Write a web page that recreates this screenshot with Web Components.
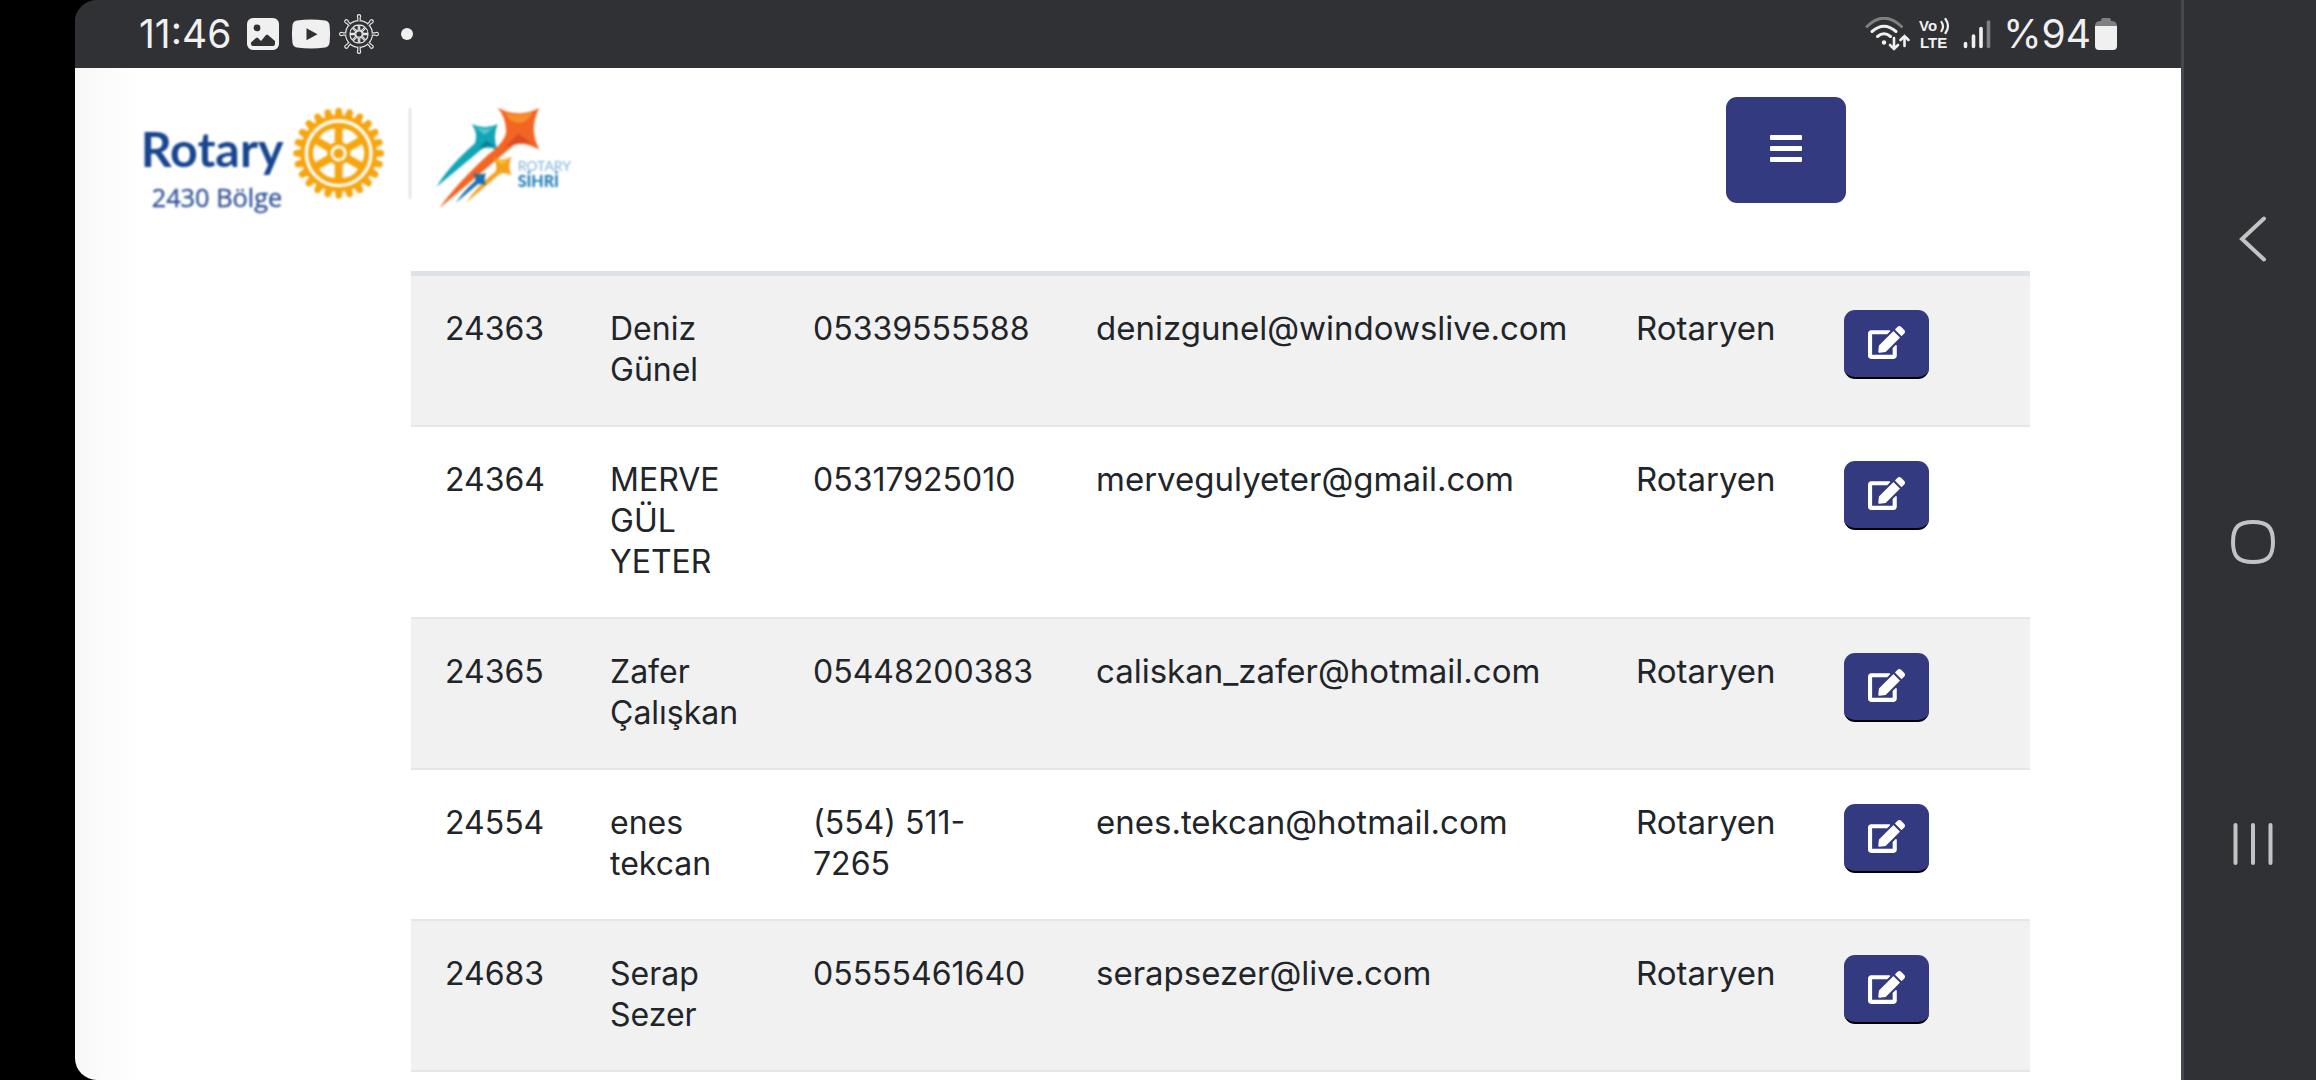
<!DOCTYPE html>
<html lang="tr">
<head>
<meta charset="utf-8">
<meta name="viewport" content="width=device-width, initial-scale=1">
<title>Rotary 2430 Bölge</title>
<style>
  body {
    margin: 0;
    background: #000;
    font-family: Inter, "Noto Sans", sans-serif;
    color: #212529;
  }
</style>
</head>
<body>
<device-frame>
  <status-bar slot="status" time="11:46" battery="%94"></status-bar>
  <site-header><rotary-logo></rotary-logo></site-header>
  <member-table></member-table>
  <system-nav slot="nav"></system-nav>
</device-frame>

<script>
class DeviceFrame extends HTMLElement {
  constructor() {
    super();
    const shadow = this.attachShadow({ mode: 'open' });
    shadow.innerHTML = `
      <style>
      :host {
        display: flex;
        min-height: 100vh;
        padding-left: 75px;
        box-sizing: border-box;
        background: #000;
      }

      .screen {
        flex: 1;
        min-width: 0;
        display: flex;
        flex-direction: column;
        overflow: hidden;
        border-radius: 22px 0 0 22px;
        background: #303134;
      }

      main {
        flex: 1;
        background: linear-gradient(to right, #f8f8f8, #fff 64px);
      }
      </style>
      <div class="screen">
        <slot name="status"></slot>
        <main><slot></slot></main>
      </div>
      <slot name="nav"></slot>
    `;
  }
}

class StatusBar extends HTMLElement {
  constructor() {
    super();
    const shadow = this.attachShadow({ mode: 'open' });
    const time = this.getAttribute('time');
    const battery = this.getAttribute('battery');

    shadow.innerHTML = `
      <style>
      :host {
        display: flex;
        justify-content: space-between;
        align-items: center;
        height: 68px;
        padding: 0 64px;
        color: #f0f0f0;
        background: #303134;
        font-size: 39px;
        line-height: 48px;
      }

      .group,
      .battery {
        display: flex;
        align-items: center;
        gap: 8px;
      }

      .battery {
        gap: 4px;
        margin-left: 4px;
      }

      .time {
        margin-right: 8px;
      }

      .picture {
        margin-right: 4px;
      }

      .dot {
        width: 12px;
        height: 12px;
        margin-left: 14px;
        border-radius: 50%;
        background: #f0f0f0;
      }

      svg {
        display: block;
        flex: none;
      }
      </style>
      <div class="group">
        <span class="time">${time}</span>
        <svg class="picture" width="32" height="32" viewBox="0 0 32 32">
          <path fill="#f0f0f0" fill-rule="evenodd" d="M6 0h20a6 6 0 0 1 6 6v20a6 6 0 0 1-6 6H6a6 6 0 0 1-6-6V6a6 6 0 0 1 6-6zM10 6.500a3.400 3.400 0 1 0 0 6.800 3.400 3.400 0 0 0 0-6.800zM4 26q0 2 2 2h20q2 0 2-2v-3l-7-6q-1-.8-2 0l-5 6-3-3q-1-.8-2 0l-5 4.500z"/>
        </svg>
        <svg width="40" height="32" viewBox="0 0 40 32">
          <path fill="#f0f0f0" fill-rule="evenodd" d="M6 2.500q14-1.800 28 0 4 .6 4.600 5 1 8.500 0 17-.6 4.400-4.600 5-14 1.800-28 0-4-.6-4.600-5-1-8.500 0-17 .6-4.400 4.600-5zM15.500 10.300v12l11-6z"/>
        </svg>
        <svg class="helm" width="40" height="40" viewBox="0 0 40 40" fill="none" stroke="#e4e4e4" stroke-width="1.200"></svg>
        <span class="dot"></span>
      </div>
      <div class="group">
        <svg width="46" height="34" viewBox="0 0 46 34" fill="none" stroke="#f0f0f0" stroke-width="3" stroke-linecap="round">
          <path stroke="#7f8082" d="M2 9.500Q19-7 36.500 9.500"/>
          <path d="M7 14.500q12-10.500 24 0M12.500 19.500q6.500-5.500 13 0"/>
          <circle cx="19" cy="25.500" r="2.200" fill="#f0f0f0" stroke="none"/>
          <path stroke-width="2.600" d="M29 21v11M25 28l4 4 4-4M39.500 29V19M35.500 23l4-4 4 4"/>
        </svg>
        <svg width="32" height="36" viewBox="0 0 32 36">
          <g fill="#f0f0f0" font-family="Liberation Sans, sans-serif" font-weight="700" font-size="15">
            <text x="0" y="15">Vo</text>
            <text x="1" y="32">LTE</text>
          </g>
          <path fill="none" stroke="#f0f0f0" stroke-width="2.200" stroke-linecap="round" d="M22.500 6q3 4.500 0 9M26.500 3q5 7 0 14"/>
        </svg>
        <svg width="32" height="32" viewBox="0 0 32 32" stroke="#f0f0f0" stroke-width="3.600" stroke-linecap="round">
          <path d="M6.500 25.500v3M14.500 18v10.500M22 10.500v18"/>
          <path stroke="#7f8082" d="M29.500 4v24.500"/>
        </svg>
        <div class="battery">
          <span>${battery}</span>
          <svg width="22" height="32" viewBox="0 0 22 32">
            <path fill="#7f8082" d="M6 3q0-3 2-3h6q2 0 2 3 6 0 6 5H0q0-5 6-5z"/>
            <path fill="#f0f0f0" d="M0 8h22v20q0 4-4 4H4q-4 0-4-4z"/>
          </svg>
        </div>
      </div>
    `;

    // ship's wheel: eight handles round the rim, eight windows round the hub
    const rim = '<circle cx="20" cy="20" r="13.400"/><circle cx="20" cy="20" r="3.200"/>';
    let spokes = '';
    for (let i = 0; i < 8; i++) {
      spokes += `<g transform="rotate(${i * 45} 20 20)">
        <path fill="#303134" d="M18.800 7V4q-1.200-3.400 1.200-3.400T21.200 4v3"/>
      </g>
      <g transform="rotate(${i * 45 + 22.5} 20 20)">
        <path d="M17.200 11.500q2.800-1.400 5.600 0L20.900 16h-1.800z"/>
      </g>`;
    }
    shadow.querySelector('.helm').innerHTML = rim + spokes;
  }
}

class RotaryLogo extends HTMLElement {
  constructor() {
    super();
    const shadow = this.attachShadow({ mode: 'open' });

    let teeth = '';
    for (let i = 0; i < 24; i++) {
      teeth += `<path transform="rotate(${i * 15})" d="M-12-112l3-20q9-9 18 0l3 20z"/>`;
    }
    let windows = '';
    for (let i = 0; i < 6; i++) {
      windows += `<path transform="rotate(${i * 60 + 30})" d="M-27-70q27-14 54 0L6-34q-6-3-12 0z"/>`;
    }

    shadow.innerHTML = `
      <style>
      :host {
        display: block;
      }

      svg {
        display: block;
        filter: blur(1px);
      }
      </style>
      <svg width="432" height="110" viewBox="66 48 1296 330" role="img" aria-label="Rotary 2430 Bölge">
        <text x="62" y="232" font-family="Lato, sans-serif" font-weight="700" font-size="145" fill="#17458f">Rotary</text>
        <text x="95" y="350" font-family="Open Sans, sans-serif" font-size="76" fill="#2f5196" stroke="#2f5196">2430 Bölge</text>

        <g transform="translate(656 190)" fill="#f6a50f">
          ${teeth}
          <circle r="115"/>
          <circle r="97" fill="none" stroke="#fff" stroke-width="10"/>
          <g fill="#fff">${windows}</g>
          <circle r="20" fill="none" stroke="#fff" stroke-width="9"/>
        </g>

        <path stroke="#d5d6da" stroke-width="5" d="M870 54v272"/>

        <path fill="#12a5b5" d="M1055 103q40 17 78 0-16 37-1 77-26-12-46-3L950 290q35-60 115-130 10-30-10-57z"/>
        <path fill="#5cc6cc" d="M1066 112q30 10 56 0l-28 22z"/>
        <path fill="#0b7d91" d="M1128 170l-30-18-22 24q30-14 52-6z"/>
        <path fill="#f26522" d="M1133 53q62 34 125 1-33 64 0 125-42-24-76-14L958 355q50-72 148-162 58-46 52-76-2-36-25-64z"/>
        <path fill="#f7902b" d="M1155 66q40 18 82-1-14 34-41 34t-41-33z"/>
        <path fill="#dc4a27" d="M1246 168l-50-36-46 44q60-34 96-8z"/>
        <path fill="#f5a01f" d="M1118 203q29 12 57-3-14 28 0 56-20-10-36-4l-101 86q32-48 90-95 4-24-10-40z"/>
        <path fill="#fbc02d" d="M1127 208q20 6 40-2l-20 18z"/>
        <path fill="#1b6fb3" d="M1058 249q20 8 40 0-8 18 0 37-14-6-25-3l-65 55q20-32 58-66 2-14-8-23z"/>

        <text x="1193" y="242" font-family="Lato, sans-serif" font-size="42" fill="#7fb2d8">ROTARY</text>
        <text x="1193" y="292" font-family="Lato, sans-serif" font-weight="900" font-size="48" fill="#237fb8">SİHRİ</text>
      </svg>
    `;
  }
}

class SiteHeader extends HTMLElement {
  constructor() {
    super();
    const shadow = this.attachShadow({ mode: 'open' });
    shadow.innerHTML = `
      <style>
      header {
        display: flex;
        justify-content: space-between;
        align-items: flex-start;
        padding: 29px 335px 55px 67px;
      }

      .brand {
        padding-top: 9px;
      }

      button {
        display: flex;
        flex-direction: column;
        align-items: center;
        justify-content: center;
        gap: 6px;
        width: 120px;
        height: 106px;
        padding: 0 0 4px;
        border: 0;
        border-radius: 11px;
        background: #333a80;
        cursor: pointer;
      }

      .bar {
        width: 32px;
        height: 5px;
        border-radius: 1px;
        background: #fff;
      }
      </style>
      <header>
        <div class="brand"><slot></slot></div>
        <button type="button" aria-label="Menü">
          <span class="bar"></span>
          <span class="bar"></span>
          <span class="bar"></span>
        </button>
      </header>
    `;
  }
}

class EditButton extends HTMLElement {
  constructor() {
    super();
    const shadow = this.attachShadow({ mode: 'open' });
    shadow.innerHTML = `
      <style>
      :host {
        display: block;
      }

      button {
        display: flex;
        align-items: center;
        justify-content: center;
        width: 85px;
        height: 69px;
        padding: 0 0 2px;
        border: 0;
        border-bottom: 2px solid #000;
        border-radius: 11px;
        background: #333a80;
        cursor: pointer;
      }
      </style>
      <button type="button" aria-label="Düzenle">
        <svg width="37" height="33" viewBox="0 0 576 512" fill="#fff">
          <path d="M402.6 83.2l90.2 90.2c3.8 3.8 3.8 10 0 13.8L274.4 405.6l-92.8 10.3c-12.4 1.4-22.9-9.1-21.5-21.5l10.3-92.8L388.8 83.2c3.8-3.8 10-3.8 13.8 0zm162-22.9l-48.8-48.8c-15.2-15.2-39.9-15.2-55.2 0l-35.4 35.4c-3.8 3.8-3.8 10 0 13.8l90.2 90.2c3.8 3.8 10 3.8 13.8 0l35.4-35.4c15.2-15.3 15.2-40 0-55.2zM384 346.2V448H64V128h229.8c3.2 0 6.2-1.3 8.5-3.5l40-40c7.6-7.6 2.2-20.5-8.5-20.5H48C21.5 64 0 85.5 0 112v352c0 26.500 21.500 48 48 48h352c26.500 0 48-21.500 48-48V306.2c0-10.700-12.900-16-20.500-8.500l-40 40c-2.200 2.300-3.500 5.300-3.500 8.500z"/>
        </svg>
      </button>
    `;
  }
}

const members = [
  { id: '24363', name: 'Deniz Günel', phone: '05339555588', email: 'denizgunel@windowslive.com', role: 'Rotaryen' },
  { id: '24364', name: 'MERVE GÜL YETER', phone: '05317925010', email: 'mervegulyeter@gmail.com', role: 'Rotaryen' },
  { id: '24365', name: 'Zafer Çalışkan', phone: '05448200383', email: 'caliskan_zafer@hotmail.com', role: 'Rotaryen' },
  { id: '24554', name: 'enes tekcan', phone: '(554) 511-7265', email: 'enes.tekcan@hotmail.com', role: 'Rotaryen' },
  { id: '24683', name: 'Serap Sezer', phone: '05555461640', email: 'serapsezer@live.com', role: 'Rotaryen' }
];

class MemberTable extends HTMLElement {
  constructor() {
    super();
    const shadow = this.attachShadow({ mode: 'open' });

    const rows = members
      .map((m) => `
        <tr>
          <td>${m.id}</td>
          <td>${m.name}</td>
          <td>${m.phone}</td>
          <td class="text">${m.email}</td>
          <td class="text">${m.role}</td>
          <td class="action"><edit-button></edit-button></td>
        </tr>`)
      .join('');

    shadow.innerHTML = `
      <style>
      :host {
        display: block;
        padding: 0 151px 0 336px;
      }

      table {
        width: 100%;
        table-layout: fixed;
        border-collapse: separate;
        border-spacing: 0;
        border-top: 5px solid #dee2e6;
        font-size: 32px;
        line-height: 41px;
      }

      td {
        padding: 32px 34px 35px;
        border-bottom: 2px solid #e4e6e8;
        vertical-align: top;
      }

      .text {
        font-size: 33px;
      }

      .action {
        padding-top: 34px;
        padding-bottom: 0;
      }

      tr:nth-child(odd) {
        background: #f1f1f1;
      }
      </style>
      <table>
        <colgroup>
          <col style="width: 165px">
          <col style="width: 203px">
          <col style="width: 283px">
          <col style="width: 540px">
          <col style="width: 208px">
          <col>
        </colgroup>
        <tbody>${rows}</tbody>
      </table>
    `;
  }
}

class SystemNav extends HTMLElement {
  constructor() {
    super();
    const shadow = this.attachShadow({ mode: 'open' });
    shadow.innerHTML = `
      <style>
      :host {
        display: block;
        flex: none;
        width: 135px;
        box-sizing: border-box;
        border-left: 3px solid #47474f;
        background: #303134;
      }

      nav {
        display: flex;
        flex-direction: column;
        justify-content: space-between;
        align-items: center;
        height: 100vh;
        padding: 216px 0 213px 6px;
        box-sizing: border-box;
      }

      button {
        padding: 0;
        border: 0;
        background: none;
        cursor: pointer;
      }

      svg {
        display: block;
        fill: none;
        stroke: #c3c3c5;
        stroke-width: 4;
        stroke-linecap: round;
      }
      </style>
      <nav>
        <button type="button" aria-label="Geri">
          <svg width="46" height="46" viewBox="0 0 46 46"><path d="M34 2.500L12 23l22 20.500"/></svg>
        </button>
        <button type="button" aria-label="Ana ekran">
          <svg width="46" height="46" viewBox="0 0 46 46"><path d="M23 3q11 0 15.500 4.500T43 23t-4.500 15.500T23 43 7.500 38.500 3 23 7.500 7.500 23 3z"/></svg>
        </button>
        <button type="button" aria-label="Son uygulamalar">
          <svg width="46" height="46" viewBox="0 0 46 46"><path d="M5.500 4v38M23 4v38M40.500 4v38"/></svg>
        </button>
      </nav>
    `;
  }
}

customElements.define('device-frame', DeviceFrame);
customElements.define('status-bar', StatusBar);
customElements.define('rotary-logo', RotaryLogo);
customElements.define('site-header', SiteHeader);
customElements.define('edit-button', EditButton);
customElements.define('member-table', MemberTable);
customElements.define('system-nav', SystemNav);
</script>
</body>
</html>
